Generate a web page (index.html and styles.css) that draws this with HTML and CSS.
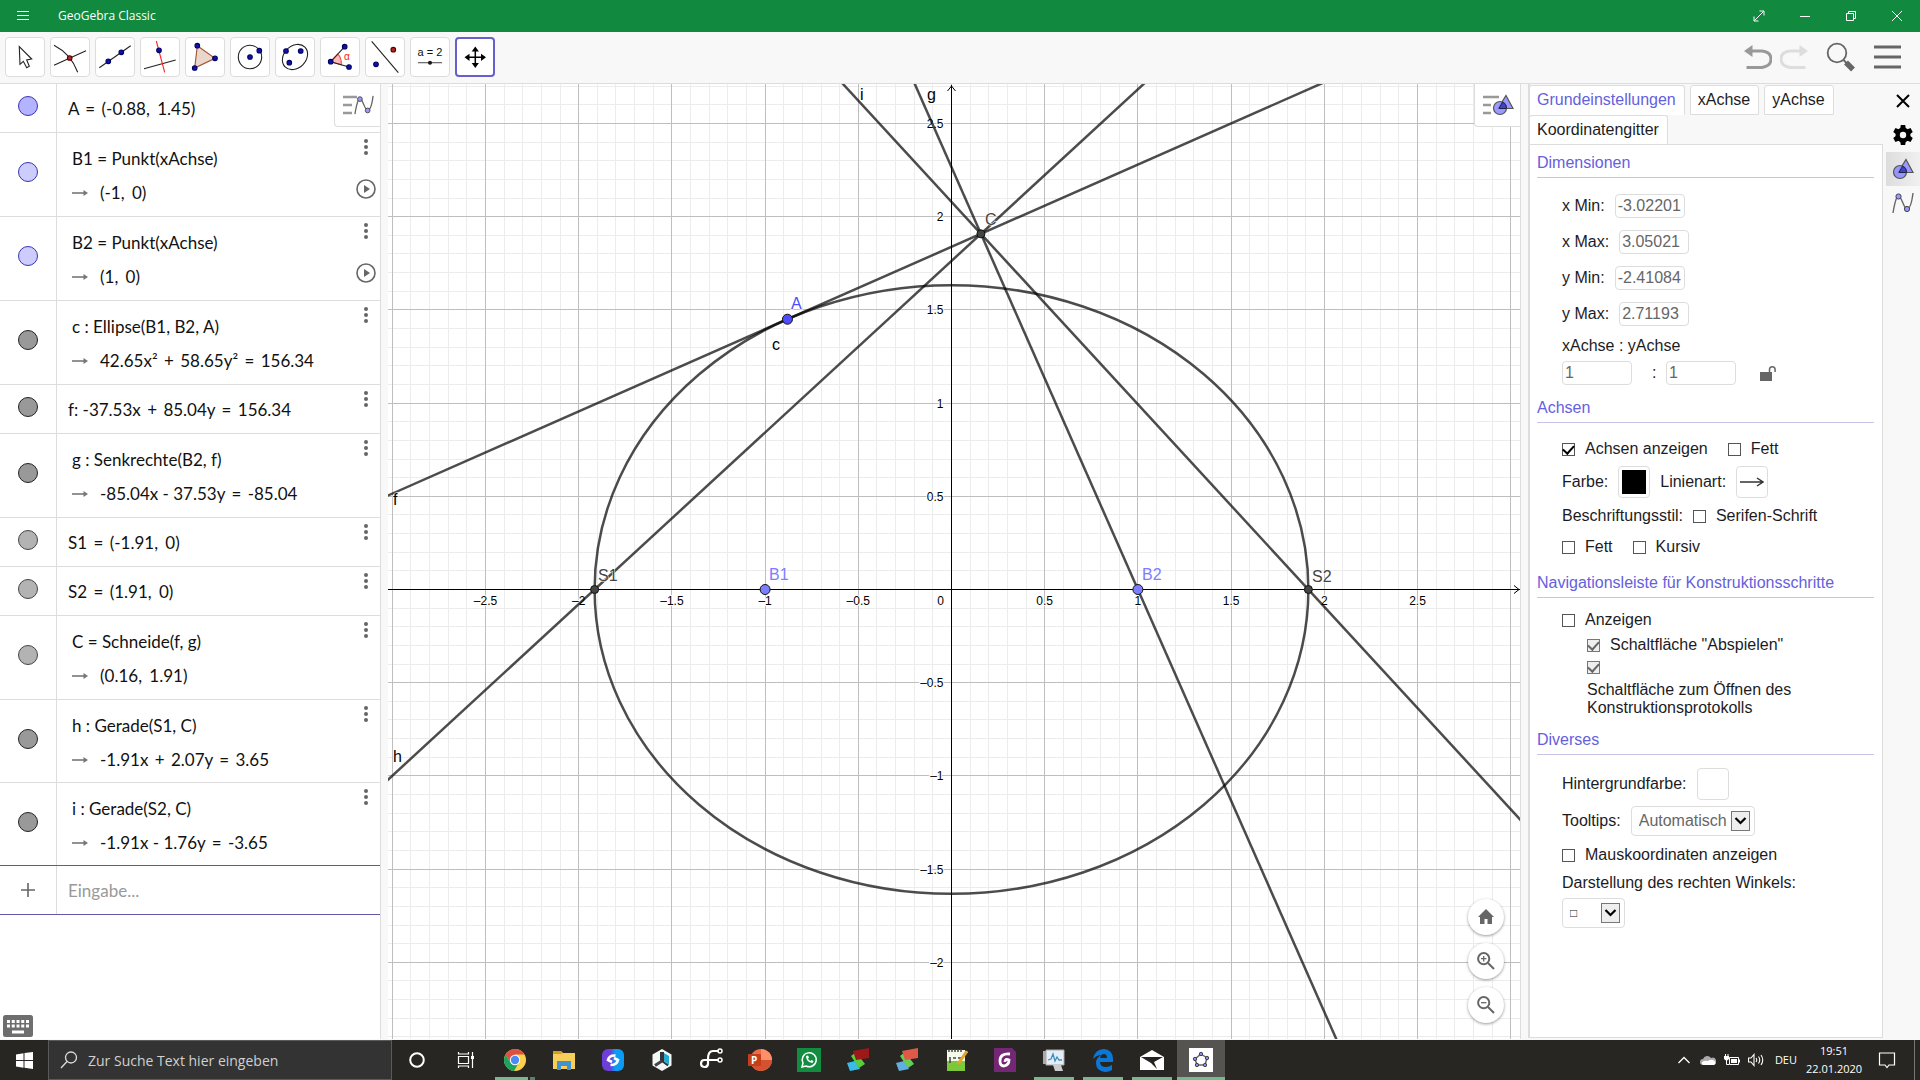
FILE: index.html
```html
<!DOCTYPE html>
<html lang="de">
<head>
<meta charset="utf-8">
<title>GeoGebra Classic</title>
<link rel="stylesheet" href="styles.css">
</head>
<body>
<svg class="defs" aria-hidden="true">
  <symbol id="i-dots" viewBox="0 0 4 16"><circle cx="2" cy="2" r="2"/><circle cx="2" cy="8" r="2"/><circle cx="2" cy="14" r="2"/></symbol>
  <symbol id="i-play" viewBox="0 0 20 20"><circle cx="10" cy="10" r="9" fill="none" stroke="#666" stroke-width="1.6"/><path d="M8 6l6 4-6 4z"/></symbol>
  <symbol id="i-arrow" viewBox="0 0 16 8"><path d="M0 4h13" stroke="#777" stroke-width="1.6"/><path d="M11.5 1l4.500 3-4.500 3z"/></symbol>
  <symbol id="i-curve" viewBox="0 0 22 22"><path d="M1 21C3 9 5 3 7 4c3 2 5 13 8 13 3 0 5-8 6-16" fill="none" stroke="#666" stroke-width="1.4"/><circle cx="6.500" cy="4.500" r="2.600" fill="#99f" stroke="#444"/><circle cx="15" cy="17" r="2.600" fill="#99f" stroke="#444"/></symbol>
  <symbol id="i-shapes" viewBox="0 0 22 22"><path d="M14 1.500l7 13H6z" fill="#99f" stroke="#555" stroke-width="1.200"/><circle cx="8" cy="14" r="6.500" fill="#88f" fill-opacity=".85" stroke="#555" stroke-width="1.200"/><path d="M10.500 8.200A6.500 6.500 0 0 1 14.400 14.500H7z" fill="#4444c8" stroke="#224" stroke-width="1"/></symbol>
  <symbol id="i-chev" viewBox="0 0 19 20"><rect x=".5" y=".5" width="18" height="19" fill="#eee" stroke="#777"/><path d="M4.500 7l5 5 5-5" fill="none" stroke="#000" stroke-width="2.200"/></symbol>
</svg>

<header class="titlebar">
  <button class="burger" aria-label="Menü"><svg width="12" height="10" viewBox="0 0 12 10"><path d="M0 .5h12M0 4.500h12M0 8.500h12" stroke="#fff"/></svg></button>
  <span class="app-name">GeoGebra Classic</span>
  <div class="win-controls">
    <button aria-label="Vollbild"><svg width="12" height="12" viewBox="0 0 12 12"><path d="M1.500 10.500l9-9M6.500 1h4.500v4.500M1 6.500V11h4.500"/></svg></button>
    <button aria-label="Minimieren"><svg width="12" height="12" viewBox="0 0 12 12"><path d="M1 6.500h10"/></svg></button>
    <button aria-label="Wiederherstellen"><svg width="12" height="12" viewBox="0 0 12 12"><path d="M1.500 3.500h7v7h-7zM3.500 3.500v-2h7v7h-2"/></svg></button>
    <button aria-label="Schließen"><svg width="12" height="12" viewBox="0 0 12 12"><path d="M1 1l10 10M11 1L1 11"/></svg></button>
  </div>
</header>

<nav class="toolbar" aria-label="Werkzeuge">
  <div class="tools">
    <button class="tool" aria-label="Bewege"><svg viewBox="1 1 38 38"><path d="M14.300 9.700L15 27.300l3.300-3 3.400 6.400 2.600-1.400-2.600-6.300 5-1z" fill="#fff"/></svg></button>
    <button class="tool" aria-label="Schneide"><svg viewBox="1 1 38 38"><path d="M4 8.300Q21 17 27.700 35.300M4 28.300l32-14.600"/><circle class="red" cx="19.700" cy="21" r="2.300"/></svg></button>
    <button class="tool" aria-label="Gerade"><svg viewBox="1 1 38 38"><path d="M4.300 30.700L35.700 8.700"/><circle class="blue" cx="13.300" cy="24.300" r="2.300"/><circle class="blue" cx="26.300" cy="15.300" r="2.300"/></svg></button>
    <button class="tool" aria-label="Senkrechte Gerade"><svg viewBox="1 1 38 38"><path d="M4 31.700L35.700 23"/><path d="M16.300 4l8.400 31.300" stroke="#f22"/><circle class="blue" cx="19" cy="13.300" r="2.300"/></svg></button>
    <button class="tool" aria-label="Vieleck"><svg viewBox="1 1 38 38"><path d="M12.300 8.700L30 21.300 9.700 31z" fill="#ebd6cc" stroke="#a0522d"/><circle class="blue" cx="12.300" cy="8.700" r="2.300"/><circle class="blue" cx="30" cy="21.300" r="2.300"/><circle class="blue" cx="9.700" cy="31" r="2.300"/></svg></button>
    <button class="tool" aria-label="Kreis"><svg viewBox="1 1 38 38"><circle cx="20" cy="20" r="11.700"/><circle class="blue" cx="20" cy="20" r="2.300"/><circle class="blue" cx="29.300" cy="13.700" r="2.300"/></svg></button>
    <button class="tool" aria-label="Ellipse"><svg viewBox="1 1 38 38"><ellipse cx="20" cy="20" rx="14" ry="11" transform="rotate(-45 20 20)"/><circle class="blue" cx="11" cy="14" r="2.300"/><circle class="blue" cx="25.700" cy="14" r="2.300"/><circle class="blue" cx="14.300" cy="25.700" r="2.300"/></svg></button>
    <button class="tool" aria-label="Winkel"><svg viewBox="1 1 38 38"><path d="M10.700 24.700l7-7.500q4 3.500 3.600 10.500z" fill="#fbb" stroke="#e44"/><path d="M24.700 9.700l-14 15L29 30"/><circle class="blue" cx="10.700" cy="24.700" r="2.300"/><circle class="blue" cx="24.700" cy="9.700" r="2.300"/><circle class="blue" cx="29" cy="30" r="2.300"/><text x="24" y="23" class="alpha">α</text></svg></button>
    <button class="tool" aria-label="Spiegeln"><svg viewBox="1 1 38 38"><path d="M6.700 4.300l26.600 31.400"/><circle class="blue" cx="11" cy="27.300" r="2.300"/><circle class="red" cx="28.300" cy="12.700" r="2.300"/></svg></button>
    <button class="tool" aria-label="Schieberegler"><svg viewBox="1 1 38 38"><text x="20" y="19" text-anchor="middle" class="slider-text">a = 2</text><path d="M8 25.700h24" stroke="#555"/><circle cx="20" cy="25.700" r="1.500" fill="#111"/></svg></button>
    <button class="tool active" aria-label="Verschiebe Zeichenblatt"><svg viewBox="2 2 36 36"><path d="M12 20.300h17M20.300 12v17" stroke="#000" stroke-width="1.500"/><path d="M20.300 9.500l3.600 5h-7.200zM20.300 31l3.600-5h-7.200zM9.500 20.300l5-3.600v7.200zM31 20.300l-5-3.600v7.200z" stroke="none" fill="#000"/></svg></button>
  </div>
  <div class="actions">
    <button aria-label="Rückgängig"><svg width="28" height="24" viewBox="0 0 28 24"><path d="M7 6h11q9 1 9 8t-9 8.500H2.500" fill="none" stroke="#999" stroke-width="3"/><path d="M0 6l8.500-6v12z" fill="#999"/></svg></button>
    <button aria-label="Wiederherstellen"><svg width="28" height="24" viewBox="0 0 28 24"><path d="M21 6H10Q1 7 1 14t9 8.500h15.500" fill="none" stroke="#ddd" stroke-width="3"/><path d="M28 6l-8.500-6v12z" fill="#ddd"/></svg></button>
    <button class="find" aria-label="Suchen"><svg width="30" height="30" viewBox="0 0 30 30"><circle cx="11" cy="11" r="9.300" fill="none" stroke="#666" stroke-width="1.800"/><path d="M17.500 18l3.500 3.500" stroke="#666" stroke-width="2"/><path d="M20 20.500l7 7" stroke="#666" stroke-width="5.500"/></svg></button>
    <button aria-label="Hauptmenü"><svg width="28" height="24" viewBox="0 0 28 24"><path d="M0 2h27M0 12h27M0 22h27" stroke="#666" stroke-width="3"/></svg></button>
  </div>
</nav>

<main class="workspace">
  <section class="algebra" aria-label="Algebra">
    <button class="stylebar" aria-label="Stilleiste Algebra"><svg width="32" height="24" viewBox="0 0 32 24"><path d="M1 4h14M1 12h9M1 20h9" stroke="#999" stroke-width="2.400"/></svg><svg class="over-icon" width="20" height="22"><use href="#i-curve"/></svg></button>
    <div class="row"><div class="mark"><i class="marble free"></i></div><div class="cell"><p>A <b>=</b> (-0.88<i>,</i> 1.45)</p></div></div>
    <div class="row tall"><div class="mark"><i class="marble path"></i></div><div class="cell"><p>B1 = Punkt(xAchse)</p><p class="out"><svg><use href="#i-arrow"/></svg><span>(-1<i>,</i> 0)</span></p></div><div class="side"><button aria-label="Mehr"><svg class="dots"><use href="#i-dots"/></svg></button><button aria-label="Abspielen"><svg class="play"><use href="#i-play"/></svg></button></div></div>
    <div class="row tall"><div class="mark"><i class="marble path"></i></div><div class="cell"><p>B2 = Punkt(xAchse)</p><p class="out"><svg><use href="#i-arrow"/></svg><span>(1<i>,</i> 0)</span></p></div><div class="side"><button aria-label="Mehr"><svg class="dots"><use href="#i-dots"/></svg></button><button aria-label="Abspielen"><svg class="play"><use href="#i-play"/></svg></button></div></div>
    <div class="row tall"><div class="mark"><i class="marble dark"></i></div><div class="cell"><p>c : Ellipse(B1, B2, A)</p><p class="out"><svg><use href="#i-arrow"/></svg><span>42.65x² <b>+</b> 58.65y² <b>=</b> 156.34</span></p></div><div class="side"><button aria-label="Mehr"><svg class="dots"><use href="#i-dots"/></svg></button></div></div>
    <div class="row"><div class="mark"><i class="marble dark"></i></div><div class="cell"><p>f: -37.53x <b>+</b> 85.04y <b>=</b> 156.34</p></div><div class="side"><button aria-label="Mehr"><svg class="dots"><use href="#i-dots"/></svg></button></div></div>
    <div class="row tall"><div class="mark"><i class="marble dark"></i></div><div class="cell"><p>g : Senkrechte(B2, f)</p><p class="out"><svg><use href="#i-arrow"/></svg><span>-85.04x - 37.53y <b>=</b> -85.04</span></p></div><div class="side"><button aria-label="Mehr"><svg class="dots"><use href="#i-dots"/></svg></button></div></div>
    <div class="row"><div class="mark"><i class="marble dep"></i></div><div class="cell"><p>S1 <b>=</b> (-1.91<i>,</i> 0)</p></div><div class="side"><button aria-label="Mehr"><svg class="dots"><use href="#i-dots"/></svg></button></div></div>
    <div class="row"><div class="mark"><i class="marble dep"></i></div><div class="cell"><p>S2 <b>=</b> (1.91<i>,</i> 0)</p></div><div class="side"><button aria-label="Mehr"><svg class="dots"><use href="#i-dots"/></svg></button></div></div>
    <div class="row tall"><div class="mark"><i class="marble dep"></i></div><div class="cell"><p>C = Schneide(f, g)</p><p class="out"><svg><use href="#i-arrow"/></svg><span>(0.16<i>,</i> 1.91)</span></p></div><div class="side"><button aria-label="Mehr"><svg class="dots"><use href="#i-dots"/></svg></button></div></div>
    <div class="row tall line"><div class="mark"><i class="marble dark"></i></div><div class="cell"><p>h : Gerade(S1, C)</p><p class="out"><svg><use href="#i-arrow"/></svg><span>-1.91x <b>+</b> 2.07y <b>=</b> 3.65</span></p></div><div class="side"><button aria-label="Mehr"><svg class="dots"><use href="#i-dots"/></svg></button></div></div>
    <div class="row tall line"><div class="mark"><i class="marble dark"></i></div><div class="cell"><p>i : Gerade(S2, C)</p><p class="out"><svg><use href="#i-arrow"/></svg><span>-1.91x - 1.76y <b>=</b> -3.65</span></p></div><div class="side"><button aria-label="Mehr"><svg class="dots"><use href="#i-dots"/></svg></button></div></div>
    <div class="row entry"><div class="mark"><svg width="14" height="14" viewBox="0 0 14 14"><path d="M0 7h14M7 0v14" stroke="#666" stroke-width="1.600"/></svg></div><div class="cell"><input type="text" placeholder="Eingabe..." aria-label="Eingabe"></div></div>
    <button class="keyboard" aria-label="Tastatur"><svg width="30" height="22" viewBox="0 0 30 22"><rect width="30" height="22" rx="2.500" fill="#6e6e6e"/><path d="M4 6.500h22M4 11h22" stroke="#fff" stroke-width="3" stroke-dasharray="3 1.750"/><path d="M9 17h12" stroke="#fff" stroke-width="3"/></svg></button>
  </section>

  <div class="splitter"></div>

  <section class="graphics" aria-label="Grafik">
    <svg id="plot" viewBox="0 0 1132 955" preserveAspectRatio="xMidYMid slice"></svg>
    <button class="stylebar" aria-label="Stilleiste Grafik"><svg width="32" height="24" viewBox="0 0 32 24"><path d="M1 4h16M1 12h8M1 20h8" stroke="#999" stroke-width="2.400"/></svg><svg class="over-icon" width="22" height="22"><use href="#i-shapes"/></svg></button>
    <div class="zoomers">
      <button aria-label="Standardansicht"><svg width="16" height="16" viewBox="0 0 16 16"><path d="M8 0l8 8h-2v7H9.500v-5h-3v5H2V8H0z"/></svg></button>
      <button aria-label="Vergrößern"><svg width="18" height="18" viewBox="0 0 18 18" class="lens"><circle cx="6.700" cy="6.700" r="5.600"/><path d="M11 11l6 6"/><path d="M4 6.700h5.400M6.700 4v5.400" class="thin"/></svg></button>
      <button aria-label="Verkleinern"><svg width="18" height="18" viewBox="0 0 18 18" class="lens"><circle cx="6.700" cy="6.700" r="5.600"/><path d="M11 11l6 6"/><path d="M4 6.700h5.400" class="thin"/></svg></button>
    </div>
  </section>

  <div class="splitter right"></div>

  <section class="settings" aria-label="Einstellungen">
    <div class="panel">
      <div class="tabs" role="tablist">
        <button role="tab" class="tab current">Grundeinstellungen</button>
        <button role="tab" class="tab">xAchse</button>
        <button role="tab" class="tab">yAchse</button>
        <button role="tab" class="tab">Koordinatengitter</button>
      </div>
      <form class="form">
        <h2>Dimensionen</h2>
        <div class="group">
          <div class="line-36"><label for="xmin">x Min:</label><input class="num" id="xmin" value="-3.02201"></div>
          <div class="line-36"><label for="xmax">x Max:</label><input class="num" id="xmax" value="3.05021"></div>
          <div class="line-36"><label for="ymin">y Min:</label><input class="num" id="ymin" value="-2.41084"></div>
          <div class="line-36"><label for="ymax">y Max:</label><input class="num" id="ymax" value="2.71193"></div>
          <div class="line-28">xAchse : yAchse</div>
          <div class="line-26 ratio"><input class="num" value="1" aria-label="xAchse"><span class="colon">:</span><input class="num" value="1" aria-label="yAchse"><button type="button" class="lock" aria-label="Verhältnis sperren"><svg width="16" height="16" viewBox="0 0 16 16"><rect y="7" width="12" height="9" fill="#666"/><path d="M9.500 8V4.500a2.800 2.800 0 0 1 5.600 0V7" fill="none" stroke="#666" stroke-width="1.500"/></svg></button></div>
        </div>
        <h2>Achsen</h2>
        <div class="group">
          <div class="line-32"><label><input type="checkbox" checked>Achsen anzeigen</label><label><input type="checkbox">Fett</label></div>
          <div class="line-34"><span>Farbe:</span><button type="button" class="swatch" aria-label="Farbe"><i></i></button><span>Linienart:</span><button type="button" class="swatch" aria-label="Linienart"><svg width="24" height="12" viewBox="0 0 24 12"><path d="M0 6h22M17 2l6 4-6 4" fill="none" stroke="#333" stroke-width="1.500"/></svg></button></div>
          <div class="line-34"><span>Beschriftungsstil:</span><label><input type="checkbox">Serifen-Schrift</label></div>
          <div class="line-28"><label><input type="checkbox">Fett</label><label><input type="checkbox">Kursiv</label></div>
        </div>
        <h2>Navigationsleiste für Konstruktionsschritte</h2>
        <div class="group">
          <div class="line-24"><label><input type="checkbox">Anzeigen</label></div>
          <div class="line-26 sub"><label><input type="checkbox" checked disabled>Schaltfläche "Abspielen"</label></div>
          <div class="line-18 sub"><input type="checkbox" id="proto" checked disabled></div>
          <label class="proto" for="proto">Schaltfläche zum Öffnen des Konstruktionsprotokolls</label>
        </div>
        <h2>Diverses</h2>
        <div class="group">
          <div class="line-38"><span>Hintergrundfarbe:</span><button type="button" class="swatch" aria-label="Hintergrundfarbe"></button></div>
          <div class="line-36"><label for="tips">Tooltips:</label><span class="select"><select id="tips"><option>Automatisch</option></select><svg><use href="#i-chev"/></svg></span></div>
          <div class="line-32"><label><input type="checkbox">Mauskoordinaten anzeigen</label></div>
          <div class="line-24"><label for="angle">Darstellung des rechten Winkels:</label></div>
          <div class="line-36"><span class="select small"><select id="angle"><option>□</option></select><svg><use href="#i-chev"/></svg></span></div>
        </div>
      </form>
    </div>
    <aside class="views">
      <button aria-label="Schließen"><svg width="14" height="14" viewBox="0 0 14 14"><path d="M1 1l12 12M13 1L1 13" stroke="#000" stroke-width="2"/></svg></button>
      <button aria-label="Einstellungen"><svg width="22" height="22" viewBox="-11 -11 22 22"><g fill="#000"><circle r="7.500"/><path id="tooth" d="M-2.800-6l.6-4h4.400l.6 4z"/><use href="#tooth" transform="rotate(60)"/><use href="#tooth" transform="rotate(120)"/><use href="#tooth" transform="rotate(180)"/><use href="#tooth" transform="rotate(240)"/><use href="#tooth" transform="rotate(300)"/></g><circle r="3.200" fill="#f8f8f8"/></svg></button>
      <button class="selected" aria-label="Grafik"><svg width="22" height="22"><use href="#i-shapes"/></svg></button>
      <button aria-label="Algebra"><svg width="22" height="22"><use href="#i-curve"/></svg></button>
    </aside>
  </section>
</main>

<footer class="taskbar">
  <button class="start" aria-label="Start"><svg width="17" height="17" viewBox="0 0 17 17" fill="#fff"><path d="M0 2.500l7.500-1.200V8H0zM8.500 1.100L17 0v8H8.500zM0 9h7.500v6.700L0 14.600zM8.500 9H17v8l-8.500-1.200z"/></svg></button>
  <label class="search"><svg width="18" height="18" viewBox="0 0 18 18"><circle cx="11" cy="6.500" r="5.500" fill="none" stroke="#ddd" stroke-width="1.300"/><path d="M7 10.500L1 17" stroke="#ddd" stroke-width="1.300"/></svg><input type="text" placeholder="Zur Suche Text hier eingeben" aria-label="Suche"></label>
  <div class="apps">
    <button aria-label="Cortana"><svg viewBox="0 0 24 24"><circle cx="12" cy="12" r="6.800" fill="none" stroke="#fff" stroke-width="2"/></svg></button>
    <button aria-label="Taskansicht"><svg viewBox="0 0 24 24"><path d="M4.500 8.500h10v7h-10zM4.500 4v2h10V4M4.500 20v-2h10v2M18.500 4v16" fill="none" stroke="#fff" stroke-width="1.200"/><path d="M17 8h3v3h-3z" fill="#fff"/></svg></button>
    <button class="open multi" aria-label="Chrome"><svg viewBox="0 0 24 24"><circle cx="12" cy="12" r="11" fill="#fdd14b"/><path d="M2.500 6.500a11 11 0 0 1 19 0H12L7 14z" fill="#dd5044"/><path d="M2.500 6.500A11 11 0 0 0 11 23l5-8.500-9-.5z" fill="#1ca261"/><circle cx="12" cy="12" r="5.200" fill="#fff"/><circle cx="12" cy="12" r="4.200" fill="#4c8bf5"/></svg></button>
    <button aria-label="Explorer"><svg viewBox="0 0 24 24"><path d="M1 3h8l2 2h12v16H1z" fill="#f8ce5b"/><path d="M1 3h8l1 3H1z" fill="#d89c1c"/><path d="M5 22v-9h14v9h-4v-4H9v4z" fill="#3f94cf"/></svg></button>
    <button aria-label="Synchronisierung"><svg viewBox="0 0 24 24"><defs><linearGradient id="gs"><stop offset=".4" stop-color="#6b3fd8"/><stop offset=".6" stop-color="#0a9cf5"/></linearGradient></defs><rect x="1" y="1" width="22" height="22" rx="6" fill="url(#gs)"/><path d="M14.500 7.500Q8 7 7 12l4 2M9.500 17q6.500 0 7.500-5l-4-2" fill="none" stroke="#fff" stroke-width="2.600"/></svg></button>
    <button aria-label="Würfel"><svg viewBox="0 0 24 24"><path d="M12 1l9.500 5.500v11L12 23l-9.500-5.500v-11z" fill="#f4f7f8"/><path d="M12 4v9" stroke="#333" stroke-width="4"/><path d="M14 5v8l5 4V8z" fill="#25aad1"/><path d="M12 13l-7 4.500" stroke="#444" stroke-width="3"/><path d="M12 13l6 4.500" stroke="#333" stroke-width="2"/></svg></button>
    <button aria-label="Notizen"><svg viewBox="0 0 24 24"><path d="M20 3h-6q-5 0-5 8v5a3.500 3.500 0 1 1-3.500-4H20" fill="none" stroke="#fff" stroke-width="2.200"/><circle cx="21" cy="3" r="2" fill="none" stroke="#fff" stroke-width="1.500"/><circle cx="21" cy="12" r="2" fill="none" stroke="#fff" stroke-width="1.500"/></svg></button>
    <button aria-label="PowerPoint"><svg viewBox="0 0 24 24"><circle cx="13" cy="12" r="11" fill="#ed6c47"/><path d="M13 1a11 11 0 0 1 11 11H13z" fill="#ff8f6b"/><path d="M13 12h11a11 11 0 0 1-20 6z" fill="#d35230"/><rect y="6" width="13" height="12" rx="1" fill="#c43e1c"/><text x="3" y="16" class="glyph">P</text></svg></button>
    <button aria-label="WhatsApp"><svg viewBox="0 0 24 24"><path d="M0 0h24v24H0z" fill="#128c3e"/><path d="M5 19l1-4a7 7 0 1 1 3 3z" fill="none" stroke="#fff" stroke-width="1.500"/><path d="M9 8q0 6 6.500 7l1-2-2-1-1 1q-2-1-2.500-2.500l1-1-1-2z" fill="#fff"/></svg></button>
    <button aria-label="Karten"><svg viewBox="0 0 24 24"><path d="M1 15l8-2 5 8-10 2z" fill="#3bbce8"/><path d="M5 8l5-4 9 12-6 4z" fill="#56cf38"/><path d="M7 3l16-3v10l-13 2z" fill="#9d1919"/></svg></button>
    <button aria-label="Karten 2"><svg viewBox="0 0 24 24"><path d="M1 15l8-2 5 8-10 2z" fill="#62aee0"/><path d="M5 8l5-4 9 12-6 4z" fill="#65ce55"/><path d="M7 3l16-3v10l-13 2z" fill="#df5948"/></svg></button>
    <button aria-label="Editor"><svg viewBox="0 0 24 24"><path d="M3 2h18v21H3z" fill="#f4f8e8"/><path d="M3 13h18v10H3z" fill="#7cc83a"/><path d="M5 1v3M8 1v3M11 1v3M14 1v3M17 1v3M6 9v6M9 10h3M14 10h3" stroke="#444" stroke-width="1.500"/><path d="M23 3l-9 13" stroke="#e6a52a" stroke-width="3"/></svg></button>
    <button aria-label="Gimp-Rechner"><svg viewBox="0 0 24 24"><path d="M1 0h18l4 4v20H1z" fill="#742774"/><path d="M17 6q-10-1-10 7 0 5 4 5 5-1 5-6-4-2-4 2" fill="none" stroke="#fff" stroke-width="2.800"/></svg></button>
    <button class="open" aria-label="Leistungsmonitor"><svg viewBox="0 0 24 24"><path d="M1 3h5v13H1z" fill="#aaa"/><path d="M4 2h18v15H4z" fill="#e5eef4" stroke="#aaa"/><path d="M6 12l3-1 2-5 2 7 2-4 2 3h3" fill="none" stroke="#3b8ec2" stroke-width="1.300"/><path d="M11 17h8l2 6h-8z" fill="#ccc"/></svg></button>
    <button class="open" aria-label="Edge"><svg viewBox="0 0 24 24"><path d="M2 11Q4 1 13 1q9 1 9 10v3H9q0 5 6 5 3 0 6-2v5q-3 2-7 2-9-1-9-9 0-5 5-8-4 0-8 4zM9 10h7q0-4-3-4t-4 4z" fill="#0b78d7" fill-rule="evenodd"/></svg></button>
    <button class="open" aria-label="Mail"><svg viewBox="0 0 24 24"><path d="M0 9l12-7 12 7v13H0z" fill="#fff"/><path d="M1 9h22l-9 5 3 7-6-6z" fill="#252320"/></svg></button>
    <button class="open active" aria-label="GeoGebra"><svg viewBox="0 0 24 24"><path d="M0 0h24v24H0z" fill="#fff"/><path d="M12 6l6 4-2 7H8l-2-6z" fill="none" stroke="#666" stroke-width="1.500"/><g fill="#88f" stroke="#444"><circle cx="12" cy="6" r="1.700"/><circle cx="18" cy="10" r="1.700"/><circle cx="16" cy="17" r="1.700"/><circle cx="8" cy="17" r="1.700"/><circle cx="6" cy="11" r="1.700"/></g></svg></button>
  </div>
  <div class="tray">
    <button aria-label="Ausgeblendete Symbole"><svg width="14" height="10" viewBox="0 0 14 10"><path d="M1.500 8L7 2.500 12.500 8" fill="none" stroke="#fff" stroke-width="1.300"/></svg></button>
    <button aria-label="OneDrive"><svg width="16" height="12" viewBox="0 0 16 12"><path d="M3 11a3 3 0 0 1 0-6 4.500 4.500 0 0 1 8-1 3.500 3.500 0 0 1 3 7z" fill="#aaa"/><path d="M3 11q-2-1-1-3 3-2 6-1 2-2 5-1 3 1 2 4l-1 1z" fill="#fff"/></svg></button>
    <button aria-label="Akku"><svg width="16" height="12" viewBox="0 0 16 12"><path d="M5.500 3.500h9v7h-9z" fill="none" stroke="#fff"/><path d="M7 5h6v4H7zM15 5.500h1v3h-1zM0 2h5v3L2.500 7 0 5zM1 0h1v2H1zM3.500 0h1v2h-1z" fill="#fff"/><path d="M2.500 6v4.500H5" fill="none" stroke="#fff"/></svg></button>
    <button aria-label="Lautstärke"><svg width="16" height="14" viewBox="0 0 16 14"><path d="M.5 5h2.500l3-3.500v11L3 9H.5zM8 5q1.500 2 0 4M10.500 3.500q2.500 3.500 0 7M13 2q3.500 5 0 10" fill="none" stroke="#fff" stroke-width="1.100"/></svg></button>
    <span class="lang">DEU</span>
    <time class="clock">19:51<br>22.01.2020</time>
    <button class="notes" aria-label="Benachrichtigungen"><svg width="18" height="18" viewBox="0 0 18 18"><path d="M1.500 2h15v12H11l-2 2.500L7 14H1.500z" fill="none" stroke="#fff" stroke-width="1.200"/></svg></button>
  </div>
</footer>
<script src="plot.js"></script>
</body>
</html>
```
FILE: styles.css
```css
* { box-sizing: border-box; }
body {
  margin: 0;
  height: 100vh;
  display: flex;
  flex-direction: column;
  overflow: hidden;
  background: #fff;
  color: #1c1c1f;
  font: 16px/20px "Liberation Sans", Arial, sans-serif;
}
button { border: 0; padding: 0; margin: 0; background: none; font: inherit; color: inherit; display: flex; align-items: center; justify-content: center; }
input, select { font: inherit; color: inherit; margin: 0; }
svg { display: block; flex: none; }
p { margin: 0; }
.defs { position: absolute; width: 0; height: 0; }

/* window title */
.titlebar { flex: none; height: 32px; display: flex; align-items: center; background: #11893f; color: #fff; font: 12px/16px "Open Sans", "Noto Sans", sans-serif; }
.burger { width: 46px; height: 32px; }
.app-name { padding-left: 12px; }
.win-controls { margin-left: auto; display: flex; }
.win-controls button { width: 46px; height: 32px; }
.win-controls svg { fill: none; stroke: #fff; stroke-width: 1; }

/* tool strip */
.toolbar { flex: none; height: 52px; display: flex; align-items: center; justify-content: space-between; padding: 0 18px 1px 5px; background: #f8f8f8; border-bottom: 1px solid #ddd; }
.tools { display: flex; gap: 5px; }
.tool { width: 40px; height: 40px; background: #fff; border: 1px solid #ddd; border-radius: 4px; }
.tool.active { border: 2px solid #6560cc; }
.tool svg { width: 100%; height: 100%; fill: none; stroke: #222; stroke-width: 1.1; }
.tool text { stroke: none; }
.blue { fill: #11a; stroke: #006; }
.red { fill: #b22; stroke: #500; }
.alpha { font-size: 10px; fill: #e22; }
.slider-text { font-size: 11px; fill: #111; }
.actions { display: flex; align-items: center; gap: 8px; }
.find { margin: 0 10px; }

/* work area */
.workspace { flex: 1; min-height: 0; display: flex; }
.splitter { flex: none; width: 8px; background: #f8f8f8; border-left: 1px solid #ddd; }
.algebra { flex: none; width: 380px; position: relative; display: flex; flex-direction: column; font: 17px/34px Lato, "Open Sans", sans-serif; color: #111; }
.stylebar { position: absolute; z-index: 1; top: 0; right: 0; width: 46px; height: 43px; background: #fff; border: solid #ddd; border-width: 0 0 1px 1px; border-bottom-left-radius: 4px; }
.over-icon { position: absolute; right: 6px; top: 10px; }
.row { flex: none; height: 49px; display: flex; border-bottom: 1px solid #ddd; }
.row.tall { height: 84px; }
.row.line { height: 83px; }
.mark { width: 57px; border-right: 1px solid #ddd; display: flex; align-items: center; justify-content: center; padding-bottom: 4px; }
.tall .mark { padding-bottom: 6px; }
.line .mark { padding-bottom: 4px; }
.marble { width: 20px; height: 20px; border-radius: 50%; border: 1px solid #222; background: #999; }
.marble.free { background: #b3b3ff; border-color: #3a34b0; }
.marble.path { background: #ccf; border-color: #3a34b0; }
.marble.dep { background: #b3b3b3; border-color: #444; }
.cell { flex: 1; padding: 8px 0 0 11px; }
.tall .cell { padding: 9px 0 0 15px; }
.cell b { font-weight: inherit; margin: 0 2px; }
.cell i { font-style: inherit; margin-right: 3px; }
.out { display: flex; align-items: center; gap: 12px; }
.out svg { width: 16px; height: 8px; fill: #777; }
.side { width: 28px; display: flex; flex-direction: column; align-items: center; gap: 24px; padding-top: 6px; fill: #666; }
.dots { width: 4px; height: 16px; }
.play { width: 20px; height: 20px; }
.entry { height: 50px; border-top: 1px solid #6557a8; border-bottom-color: #6557a8; margin-top: -1px; }
.entry .mark { padding: 0; }
.entry input { width: 100%; border: 0; padding: 0; height: 34px; outline: 0; background: none; }
.entry input::placeholder { color: #999; }
.keyboard { margin: auto auto 2px 3px; }

.graphics { flex: 1; min-width: 0; position: relative; background: #fff; }
#plot { width: 100%; height: 100%; }
.minor { stroke: #ececec; }
.major { stroke: #bebebe; }
.axis { stroke: #000; fill: none; }
.curve { stroke: #000; stroke-opacity: .7; stroke-width: 2.5; fill: none; }
.tick { font-size: 12px; fill: #000; stroke: #fff; stroke-width: 2; paint-order: stroke; }
.name { font-size: 16px; stroke: #fff; stroke-width: 1; paint-order: stroke; }
.zoomers { position: absolute; right: 16px; bottom: 16px; display: flex; flex-direction: column; gap: 8px; }
.zoomers button { width: 36px; height: 36px; border-radius: 50%; background: #fff; box-shadow: 0 1px 3px rgba(0, 0, 0, .4); fill: #666; }
.lens { fill: none; stroke: #666; stroke-width: 2; }
.lens .thin { stroke-width: 1.3; }

/* settings */
.settings { flex: none; width: 392px; display: flex; background: #f8f8f8; padding-bottom: 1px; }
.panel { flex: 1; display: flex; flex-direction: column; border-left: 2px solid #ddd; }
.tabs { display: flex; flex-wrap: wrap; padding-top: 1px; margin-left: -1px; }
.tab { height: 30px; padding: 0 8px 1px 7px; margin-right: 5px; background: #fff; border: 1px solid #ddd; border-radius: 3px 3px 0 0; }
.tab.current { color: #6560dd; border-bottom-color: #fff; }
.tab:last-child { margin-right: 60px; height: 29px; border-bottom: 0; }
.form { flex: 1; background: #fff; border: solid #ddd; border-width: 1px 1px 1px 0; padding: 0 8px 0 7px; }
h2 { margin: 0; padding: 8px 0 4px; font: inherit; color: #6560dd; border-bottom: 1px solid #c8c4e6; }
.group { padding: 10px 0 4px 25px; }
.group > div { display: flex; align-items: center; gap: 10px; white-space: nowrap; }
.group label { display: flex; align-items: center; }
.group label + label { margin-left: 10px; }
.line-18 { height: 18px; }
.line-24 { height: 24px; }
.line-26 { height: 26px; }
.line-28 { height: 28px; }
.line-32 { height: 32px; }
.line-34 { height: 34px; }
.line-36 { height: 36px; }
.line-38 { height: 38px; }
.num { width: 70px; height: 24px; border: 1px solid #ddd; border-radius: 4px; padding: 0 2px; color: #666; background: #fff; }
.group .ratio { gap: 0; }
.colon { width: 34px; padding-left: 20px; }
.lock { margin-left: 24px; }
.swatch { width: 32px; height: 32px; border: 1px solid #ddd; border-radius: 4px; background: #fff; }
.swatch i { width: 24px; height: 24px; background: #000; }
input[type="checkbox"] { appearance: none; flex: none; width: 13px; height: 13px; border: 1px solid #555; background: #fff; display: grid; place-items: center; }
label input[type="checkbox"] { margin-right: 10px; }
input[type="checkbox"]:checked::after { content: ""; width: 9px; height: 5px; border: solid #000; border-width: 0 0 2px 2px; transform: translateY(-1px) rotate(-48deg); }
input[type="checkbox"]:disabled { border-color: #777; background: #eee; }
input[type="checkbox"]:disabled:checked::after { border-color: #666; }
.group .sub { padding-left: 25px; }
.group .proto { display: block; padding: 5px 0 1px 25px; line-height: 18px; width: 270px; }
.select { display: grid; width: 124px; height: 30px; align-items: center; }
.select > * { grid-area: 1 / 1; }
.select select { width: 100%; height: 100%; appearance: none; border: 1px solid #ddd; border-radius: 4px; background: #fff; color: #666; padding: 0 7px; }
.select svg { width: 19px; height: 20px; justify-self: end; margin-right: 5px; pointer-events: none; }
.select.small { width: 63px; }
.select.small select { color: #222; font-size: 12px; }
.views { width: 37px; padding-left: 3px; }
.views button { width: 100%; height: 34px; }
.views .selected { background: linear-gradient(90deg, #ddd, #f0f0f0); }

/* desktop taskbar */
.taskbar { flex: none; height: 41px; border-top: 1px solid #f8f8f8; display: flex; background: #282622; color: #fff; font: 12px/18px "Open Sans", "Noto Sans", sans-serif; }
.start { width: 48px; }
.search { width: 344px; background: #333; border: 1px solid #5a5a5a; display: flex; align-items: center; gap: 10px; padding-left: 11px; }
.search input { flex: 1; min-width: 0; border: 0; background: none; padding: 1px 0 0; outline: 0; font-size: 14px; }
.search input::placeholder { color: #d0d0d0; }
.apps { display: flex; gap: 1px; padding-left: 1px; }
.apps button { width: 48px; border-bottom: 3px solid transparent; padding-top: 3px; }
.apps svg { width: 24px; height: 24px; }
.apps .open { width: 40px; margin: 0 4px; border-color: #76b98e; }
.apps .multi { border-image: linear-gradient(90deg, #76b98e 78%, #282622 78%, #282622 81%, #4d8a64 81%) 3; }
.apps .active { width: 48px; margin: 0; background: #555450; }
.glyph { font: bold 10px "Open Sans", sans-serif; fill: #fff; }
.tray { margin-left: auto; display: flex; align-items: center; gap: 8px; padding-right: 5px; }
.tray button { min-width: 16px; }
.lang { margin-left: 3px; font-size: 11px; }
.clock { text-align: center; width: 58px; white-space: nowrap; font-size: 11px; }
.tray .notes { width: 38px; height: 40px; border-right: 1px solid #777; padding-right: 18px; margin-left: 6px; }
```
FILE: plot.js
```js
(function () {
  const svg = document.getElementById('plot');
  const unit = 186.4, ox = 563.5, oy = 505.5, width = 1132, height = 955;
  const px = x => ox + x * unit;
  const py = y => oy - y * unit;
  const snap = v => Math.floor(v) + 0.5;

  function add(tag, attrs, text) {
    const el = document.createElementNS('http://www.w3.org/2000/svg', tag);
    for (const key in attrs) el.setAttribute(key, attrs[key]);
    if (text !== undefined) el.textContent = text;
    svg.appendChild(el);
  }
  const line = (cls, x1, y1, x2, y2) => add('line', { class: cls, x1, y1, x2, y2 });

  // grid: thin lines every 0.1, stronger ones every 0.5
  for (const major of [false, true]) {
    const cls = major ? 'major' : 'minor';
    for (let k = -31; k <= 31; k++) {
      if ((k % 5 === 0) !== major) continue;
      const x = snap(px(k / 10)), y = snap(py(k / 10));
      if (x > 0 && x < width) line(cls, x, 0, x, height);
      if (y > 0 && y < height) line(cls, 0, y, width, y);
    }
  }

  line('axis', 0, oy, width, oy);
  line('axis', ox, 1, ox, height);
  add('path', { class: 'axis', d: `M${width - 6} ${oy - 4}l5 4-5 4M${ox - 4} 7l4-5 4 5` });

  // axis numbers, under the curves
  const label = v => String(v).replace('-', '–');
  for (let k = -5; k <= 5; k++) {
    const v = k / 2;
    if (k === 0) {
      add('text', { class: 'tick', x: ox - 11, y: oy + 15, 'text-anchor': 'middle' }, '0');
      continue;
    }
    add('text', { class: 'tick', x: px(v), y: oy + 15, 'text-anchor': 'middle' }, label(v));
    if (k > -5) {
      const y = snap(py(v));
      add('text', { class: 'tick', x: ox - 8, y: y + 4, 'text-anchor': 'end' }, label(v));
    }
  }

  // conic and the four lines
  const a = 1.9146, b = 1.6327;
  const C = [0.1579, 1.9081];
  add('ellipse', { class: 'curve', cx: ox, cy: oy, rx: a * unit, ry: b * unit });
  const through = (x, y, slope) => {
    const at = t => py(y + slope * (t - x));
    line('curve', px(-4), at(-4), px(4), at(4));
  };
  through(C[0], C[1], 37.53 / 85.04);
  through(C[0], C[1], -85.04 / 37.53);
  through(C[0], C[1], C[1] / (C[0] + a));
  through(C[0], C[1], C[1] / (C[0] - a));

  const point = (x, y, r, fill) => add('circle', { cx: px(x), cy: py(y), r, fill, stroke: '#111' });
  point(-a, 0, 4, '#444');
  point(a, 0, 4, '#444');
  point(C[0], C[1], 4, '#444');
  point(-1, 0, 5, '#7d7dff');
  point(1, 0, 5, '#7d7dff');
  point(-0.88, 1.45, 5, '#4d4dff');

  const names = [
    ['i', 472, 16, '#000'], ['g', 539, 16, '#000'], ['C', 597, 141, '#444'],
    ['A', 403, 225, '#4d4dff'], ['c', 384, 266, '#000'], ['f', 5, 421, '#000'],
    ['h', 5, 678, '#000'], ['S1', 210, 497, '#444'], ['B1', 381, 496, '#7d7dff'],
    ['B2', 754, 496, '#7d7dff'], ['S2', 924, 498, '#444']
  ];
  for (const [text, x, y, fill] of names) add('text', { class: 'name', x, y, fill }, text);
})();
```
